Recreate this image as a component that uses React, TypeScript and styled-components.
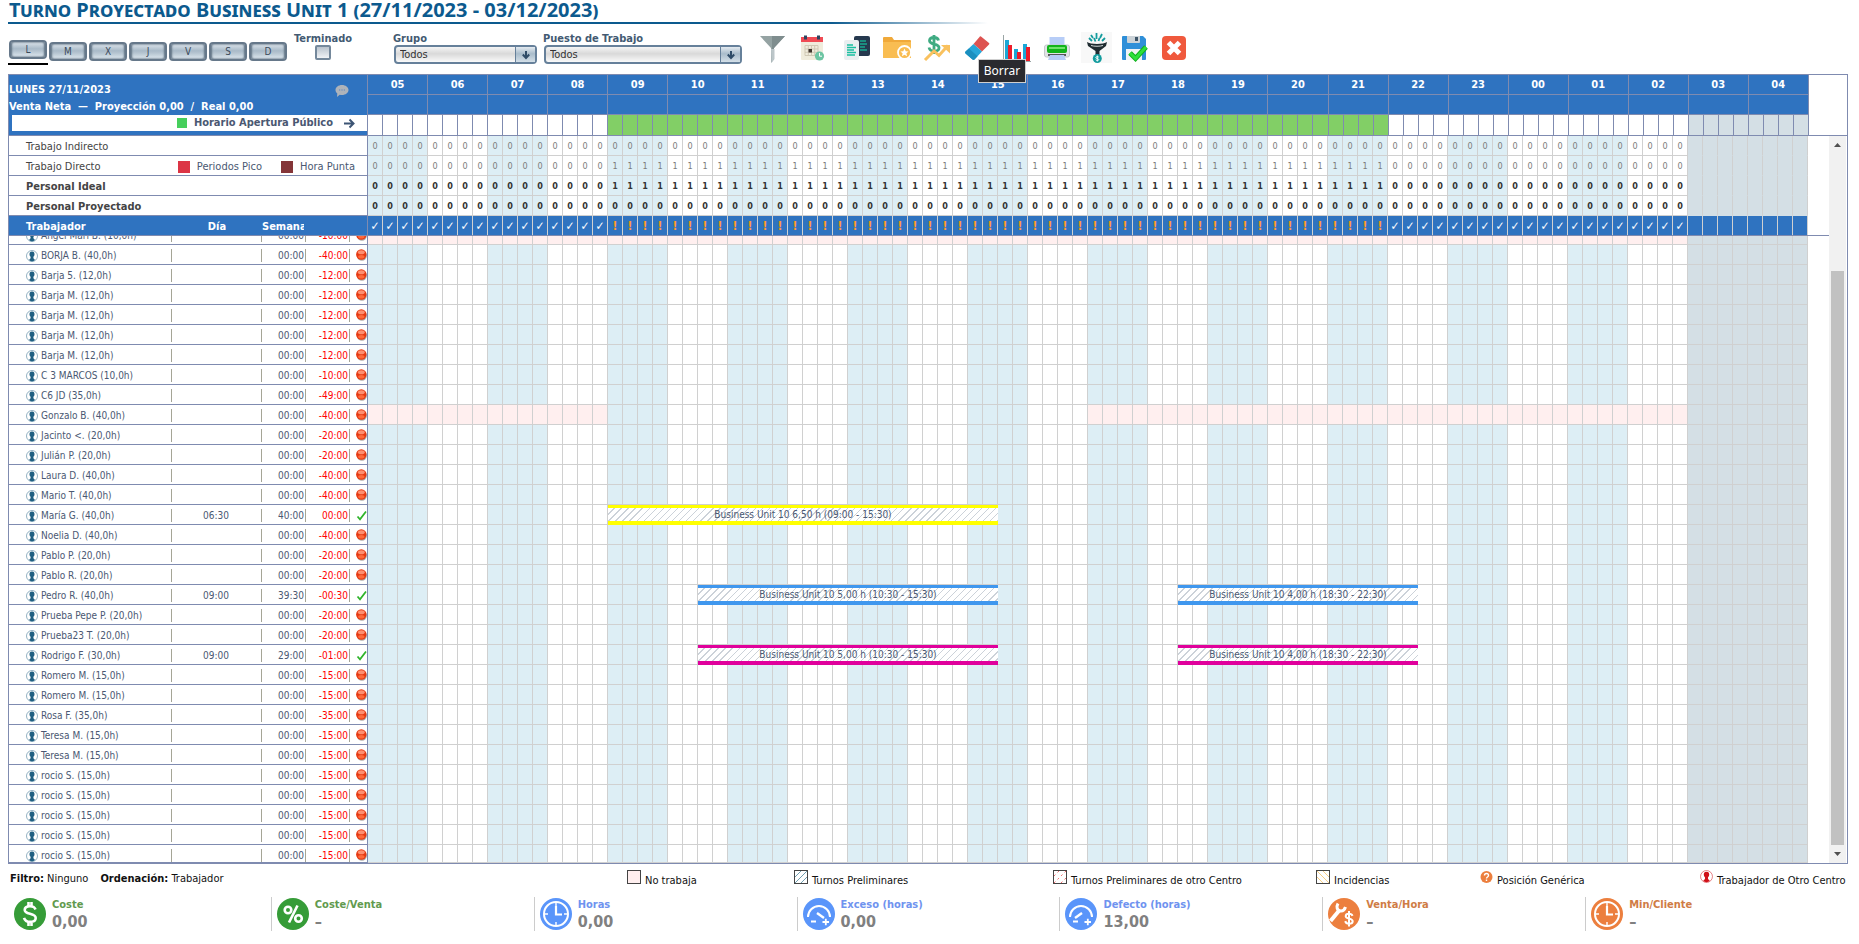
import React from 'react';
import styled, { createGlobalStyle } from 'styled-components';

const LINE = '#7f8bb0';
const GRID = '#d0d0d0';
const BLUE = '#2f73c0';
const TINT = '#ddeef5';
const CLOSED = '#d4dfe5';
const INK = '#4a5872';

const GlobalStyle = createGlobalStyle`
  * { box-sizing: border-box; }
  body {
    margin: 0;
    background: #fff;
    color: #444;
    font-family: 'DejaVu Sans Condensed', 'DejaVu Sans', sans-serif;
    font-stretch: condensed;
    font-size: 11px;
    line-height: 14px;
  }
  button, select { font: inherit; }
`;

const Page = styled.main`
  padding: 0 11px 0 8px;
`;

const Title = styled.h1`
  margin: 0;
  height: 24px;
  padding-left: 1px;
  color: #0c5a8e;
  font-family: 'Noto Sans', sans-serif;
  font-size: 20px;
  line-height: 19px;
  font-weight: 700;
  font-variant: small-caps;
  white-space: nowrap;
  background: linear-gradient(90deg, #0c5a8e 0 84%, transparent) left bottom / 980px 2px no-repeat;
`;

const Toolbar = styled.div`
  display: flex;
  align-items: flex-start;
  height: 50px;
  padding-top: 8px;
`;

const Days = styled.div`
  display: flex;
  padding-top: 8px;
`;

const DayTab = styled.div<{ $active: boolean }>`
  width: 40px;
  height: 25px;
  padding: ${p => (p.$active ? '0 1px' : '2px 1px 0')};
  border-bottom: 2px solid ${p => (p.$active ? '#000' : 'transparent')};
`;

const DayButton = styled.button`
  display: block;
  width: 38px;
  height: 19px;
  padding: 0;
  border: 2px solid #66788a;
  border-radius: 4px;
  background: linear-gradient(#dbe3ea, #a9bac8 45%, #b5c4d0 60%, #dfe9f0);
  box-shadow: inset 1px 0 2px #5f7283, inset -1px 0 2px #5f7283;
  color: #3b4a5a;
  font-size: 10px;
  line-height: 14px;
`;

const Field = styled.div<{ $width: number; $gap: number; $center?: boolean }>`
  display: flex;
  flex-direction: column;
  align-items: ${p => (p.$center ? 'center' : 'stretch')};
  width: ${p => p.$width}px;
  margin-left: ${p => p.$gap}px;
`;

const FieldLabel = styled.label`
  height: 13px;
  color: #435a72;
  font-weight: 700;
  line-height: 13px;
  white-space: nowrap;
`;

const Tick = styled.input`
  appearance: none;
  width: 16px;
  height: 15px;
  margin: 0;
  border: 2px solid #74889b;
  border-radius: 2px;
  background: linear-gradient(#b9c3cd, #f0f3f6);
`;

const SelectBox = styled.div`
  position: relative;
  display: flex;
  margin-left: 1px;
`;

const Select = styled.select`
  appearance: none;
  width: 100%;
  height: 19px;
  padding: 0 26px 0 4px;
  border: 2px solid #66809a;
  border-radius: 4px;
  background: linear-gradient(#f5f5f5, #d9d9d9 45%, #fafafa);
  color: #333;
  line-height: 14px;
`;

const SelectArrow = styled.span`
  position: absolute;
  top: 2px;
  right: 2px;
  display: flex;
  align-items: center;
  justify-content: center;
  width: 20px;
  height: 15px;
  border-left: 1px solid #66809a;
  background: linear-gradient(#e3eaf0, #a9bccb 45%, #d3dfe8);
  pointer-events: none;
`;

const Tools = styled.div<{ $gap: number }>`
  display: flex;
  gap: 8px;
  margin-left: ${p => p.$gap}px;
`;

const Tool = styled.button`
  position: relative;
  width: 32px;
  height: 32px;
  padding: 0;
  border: 0;
  background: none;

  svg { display: block; overflow: visible; }
`;

const Tooltip = styled.span`
  position: absolute;
  z-index: 2;
  left: 17px;
  top: 27px;
  width: 48px;
  height: 24px;
  border: 1px solid #cfcfcf;
  background: #2a2a2f;
  color: #fff;
  font-family: 'Noto Sans', sans-serif;
  font-size: 12px;
  line-height: 22px;
  text-align: center;
`;

const Frame = styled.section`
  border: 1px solid ${LINE};
`;

const Top = styled.div`
  border-bottom: 1px solid ${LINE};
  overflow: hidden;
`;

const Lower = styled.div`
  display: flex;
  padding-right: 1px;
`;

const Content = styled.div`
  flex: 1;
  min-width: 0;
  overflow: hidden;
`;

const Counts = styled.div`
  border-bottom: 1px solid ${LINE};
`;

const Viewport = styled.div`
  display: flex;
  flex-direction: column;
  justify-content: flex-end;
  max-height: calc(100vh - 317px);
  overflow: hidden;
`;

const Grid = styled.table`
  flex: none;
  width: 1799px;
  table-layout: fixed;
  border-collapse: separate;
  border-spacing: 0;

  td, th { padding: 0; font-weight: 400; }
`;

const Row = styled.tr<{ $h?: number }>`
  height: ${p => p.$h ?? 20}px;
`;

const DayCell = styled.th`
  vertical-align: top;
  text-align: left;
  border-right: 1px solid ${LINE};
  background: ${BLUE};
`;

const DayHead = styled.div`
  display: flex;
  justify-content: space-between;
  height: 25px;
  padding: 8px 18px 0 0;
  color: #fff;
  font-weight: 700;
`;

const Sales = styled.div`
  height: 15px;
  color: #fff;
  font-weight: 700;
  white-space: pre;
`;

const Opening = styled.div`
  display: flex;
  align-items: center;
  justify-content: flex-end;
  height: 16px;
  margin-left: 3px;
  padding-right: 12px;
  background: #fff;
  color: ${INK};
  font-weight: 700;

  svg { margin-left: 11px; }
`;

const Swatch = styled.i<{ $color: string; $size: number }>`
  width: ${p => p.$size}px;
  height: ${p => p.$size}px;
  margin-right: 7px;
  background: ${p => p.$color};
`;

const HourCell = styled.th`
  border-right: 1px solid ${LINE};
  border-bottom: 1px solid ${LINE};
  background: ${BLUE};
  color: #fff;
  text-align: center;

  && { font-weight: 700; }
`;

const OpenCell = styled.td<{ $bg: string }>`
  border-right: 1px solid ${LINE};
  background: ${p => p.$bg};
`;

const CountLabel = styled.th<{ $bold: boolean }>`
  border-right: 1px solid ${LINE};
  border-bottom: 1px solid ${LINE};
  text-align: left;
  color: #444;

  && { font-weight: ${p => (p.$bold ? 700 : 400)}; }
`;

const CountInner = styled.div`
  display: flex;
  align-items: center;
  justify-content: space-between;
  padding: 2px 12px 0 17px;
`;

const Peaks = styled.span`
  display: flex;
  align-items: center;
  gap: 19px;
  color: ${INK};
`;

const Peak = styled.span`
  display: flex;
  align-items: center;
`;

const CountCell = styled.td<{ $bg: string; $bold: boolean; $flat: boolean }>`
  border-right: 1px solid ${GRID};
  border-bottom: 1px solid ${p => (p.$flat ? p.$bg : GRID)};
  background: ${p => p.$bg};
  color: ${p => (p.$bold ? '#333' : '#7c7c7c')};
  font-size: 9px;
  line-height: 12px;
  text-align: center;

  && { font-weight: ${p => (p.$bold ? 700 : 400)}; }
`;

const StaffHead = styled.th<{ $align?: string; $last?: boolean }>`
  background: ${BLUE};
  border-right: ${p => (p.$last ? `1px solid ${LINE}` : '0')};
  color: #fff;
  text-align: ${p => p.$align ?? 'left'};

  && { font-weight: 700; padding-top: 2px; }
  &:first-child { padding-left: 17px; }
`;

const WeekHead = styled.div`
  width: 42px;
  overflow: hidden;
`;

const StateCell = styled.td<{ $warn: boolean }>`
  border-right: 1px solid ${GRID};
  background: ${BLUE};
  color: ${p => (p.$warn ? '#ff9a1f' : '#fff')};
  font-family: 'DejaVu Sans', sans-serif;
  font-size: 12px;
  line-height: 14px;
  text-align: center;

  && { font-weight: 700; }
`;

const StaffCell = styled.td<{ $last?: boolean }>`
  border-right: ${p => (p.$last ? `1px solid ${LINE}` : '0')};
  border-bottom: 1px solid ${LINE};
  color: ${INK};
  vertical-align: top;
`;

const Part = styled.div<{ $align?: string; $red?: boolean }>`
  display: flex;
  align-items: center;
  justify-content: ${p => p.$align ?? 'flex-end'};
  height: 13px;
  margin-top: 4px;
  padding-right: 1px;
  border-right: 1px solid #a5a596;
  color: ${p => (p.$red ? '#f00' : INK)};
  font-size: 10px;
  line-height: 13px;
  white-space: nowrap;
`;

const Name = styled(Part)`
  justify-content: flex-start;
  gap: 3px;
  padding-left: 17px;
`;

const Status = styled.div`
  display: flex;
  justify-content: flex-end;
  padding-top: 4px;
`;

const Slot = styled.td<{ $bg: string }>`
  border-right: 1px solid ${GRID};
  border-bottom: 1px solid ${GRID};
  background: ${p => p.$bg};
`;

const Shift = styled.div<{ $color: string }>`
  height: 20px;
  border-top: 3px solid ${p => p.$color};
  border-bottom: 4px solid ${p => p.$color};
  background: repeating-linear-gradient(135deg, #fff 0 4px, #ccd2d9 4px 5px);
  color: ${INK};
  font-size: 10px;
  line-height: 13px;
  text-align: center;
`;

const Scrollbar = styled.div`
  display: flex;
  flex-direction: column;
  align-items: center;
  width: 17px;
  background: #f1f1f1;
`;

const ScrollArrow = styled.svg`
  flex: none;
  width: 17px;
  height: 18px;
`;

const Thumb = styled.div`
  flex: 1;
  width: 13px;
  margin-top: 117px;
  background: #c1c1c1;
`;

const Legend = styled.div`
  display: grid;
  grid-template-columns: 619fr 167fr 259fr 263fr 164fr 220fr 148fr;
  height: 33px;
  padding-top: 6px;
  color: #111;
  white-space: nowrap;

  > * { min-width: 0; }
`;

const FilterInfo = styled.div`
  display: flex;
  gap: 12px;
  padding: 2px 0 0 2px;
`;

const LegendItem = styled.div`
  display: flex;
  gap: 4px;

  svg { flex: none; }
  span { padding-top: 4px; }
`;

const Kpis = styled.div`
  display: grid;
  grid-template-columns: repeat(7, 1fr);
`;

const Kpi = styled.div`
  display: flex;
  gap: 6px;
  height: 34px;
  padding: 1px 5px;
  border-left: 1px solid #ccc;

  &:first-child { border-color: transparent; }
`;

const KpiLabel = styled.div<{ $color: string }>`
  height: 14px;
  color: ${p => p.$color};
  font-weight: 700;
`;

const KpiValue = styled.div`
  color: #808080;
  font-size: 16px;
  line-height: 20px;
  font-weight: 700;
`;

const HOURS = ['05', '06', '07', '08', '09', '10', '11', '12', '13', '14', '15', '16', '17', '18', '19', '20', '21', '22', '23', '00', '01', '02', '03', '04'];
const QUARTERS = Array.from({ length: 96 }, (_, i) => i);
const OPEN_FROM = 16;
const OPEN_TO = 68;
const CLOSED_FROM = 88;

const isOpen = (i: number) => i >= OPEN_FROM && i < OPEN_TO;
const slotColor = (i: number) =>
  i >= CLOSED_FROM ? CLOSED : Math.floor(i / 4) % 2 === 0 ? TINT : '#fff';

type ShiftData = { from: number; to: number; color: string; text: string };
type Worker = {
  name: string;
  diff: string;
  day?: string;
  week?: string;
  ok?: boolean;
  off?: [number, number][];
  shifts?: ShiftData[];
};

const split = (color: string): ShiftData[] => [
  { from: 22, to: 42, color, text: 'Business Unit 10 5,00 h (10:30 - 15:30)' },
  { from: 54, to: 70, color, text: 'Business Unit 10 4,00 h (18:30 - 22:30)' },
];

const WORKERS: Worker[] = [
  { name: 'Ángel Marí B. (10,0h)', diff: '-10:00', off: [[0, 88]] },
  { name: 'BORJA B. (40,0h)', diff: '-40:00' },
  { name: 'Barja 5. (12,0h)', diff: '-12:00' },
  { name: 'Barja M. (12,0h)', diff: '-12:00' },
  { name: 'Barja M. (12,0h)', diff: '-12:00' },
  { name: 'Barja M. (12,0h)', diff: '-12:00' },
  { name: 'Barja M. (12,0h)', diff: '-12:00' },
  { name: 'C 3 MARCOS (10,0h)', diff: '-10:00' },
  { name: 'C6 JD (35,0h)', diff: '-49:00' },
  { name: 'Gonzalo B. (40,0h)', diff: '-40:00', off: [[0, 16], [48, 88]] },
  { name: 'Jacinto <. (20,0h)', diff: '-20:00' },
  { name: 'Julián P. (20,0h)', diff: '-20:00' },
  { name: 'Laura D. (40,0h)', diff: '-40:00' },
  { name: 'Mario T. (40,0h)', diff: '-40:00' },
  {
    name: 'María G. (40,0h)', day: '06:30', week: '40:00', diff: '00:00', ok: true,
    shifts: [{ from: 16, to: 42, color: '#ffff00', text: 'Business Unit 10 6,50 h (09:00 - 15:30)' }],
  },
  { name: 'Noelia D. (40,0h)', diff: '-40:00' },
  { name: 'Pablo P. (20,0h)', diff: '-20:00' },
  { name: 'Pablo R. (20,0h)', diff: '-20:00' },
  { name: 'Pedro R. (40,0h)', day: '09:00', week: '39:30', diff: '-00:30', ok: true, shifts: split('#3f97ee') },
  { name: 'Prueba Pepe P. (20,0h)', diff: '-20:00' },
  { name: 'Prueba23 T. (20,0h)', diff: '-20:00' },
  { name: 'Rodrigo F. (30,0h)', day: '09:00', week: '29:00', diff: '-01:00', ok: true, shifts: split('#e0009c') },
  { name: 'Romero M. (15,0h)', diff: '-15:00' },
  { name: 'Romero M. (15,0h)', diff: '-15:00' },
  { name: 'Rosa F. (35,0h)', diff: '-35:00' },
  { name: 'Teresa M. (15,0h)', diff: '-15:00' },
  { name: 'Teresa M. (15,0h)', diff: '-15:00' },
  { name: 'rocio S. (15,0h)', diff: '-15:00' },
  { name: 'rocio S. (15,0h)', diff: '-15:00' },
  { name: 'rocio S. (15,0h)', diff: '-15:00' },
  { name: 'rocio S. (15,0h)', diff: '-15:00' },
  { name: 'rocio S. (15,0h)', diff: '-15:00' },
];

const COUNTS = [
  { label: 'Trabajo Indirecto', bold: false, open: 0 },
  { label: 'Trabajo Directo', bold: false, open: 1, peaks: true },
  { label: 'Personal Ideal', bold: true, open: 1 },
  { label: 'Personal Proyectado', bold: true, open: 0 },
];

const Col = styled.col<{ $w: number }>`
  width: ${p => p.$w}px;
`;

const Columns = () => (
  <colgroup>
    <Col $w={163} />
    <Col $w={90} />
    <Col $w={44} />
    <Col $w={44} />
    <Col $w={18} />
    {QUARTERS.map(i => <Col key={i} $w={15} />)}
  </colgroup>
);

const UserIcon = ({ color = '#1f5f82', size = 12 }: { color?: string; size?: number }) => (
  <svg width={size} height={size} viewBox="0 0 12 12">
    <circle cx="6" cy="6" r="5.5" fill="#fff" stroke={color} strokeWidth="0.8" strokeOpacity="0.6" />
    <path d="M6 1.500c-1.900 0-2.500 1.200-2.500 2.700 0 1.100.4 2 1.100 2.500V8.200L3 10c1 1 2 1.300 3 1.300s2-.3 3-1.300L7.400 8.200V6.700c.7-.5 1.100-1.400 1.100-2.500C8.500 2.700 7.900 1.500 6 1.500z" fill={color} />
  </svg>
);

const SadIcon = () => (
  <svg width="11" height="12" viewBox="0 0 11 12">
    <ellipse cx="5.900" cy="6.500" rx="5" ry="5.200" fill="#777" fillOpacity="0.6" />
    <circle cx="5.300" cy="5.500" r="5.200" fill="#e63912" />
    <ellipse cx="5.300" cy="3.300" rx="3.400" ry="2" fill="#ff8f70" />
    <ellipse cx="5.300" cy="7.800" rx="3.200" ry="1.800" fill="#ff6a3c" />
  </svg>
);

const CheckIcon = () => (
  <svg width="11" height="12" viewBox="0 0 11 12">
    <path d="M1.500 7.500l2.500 2.800L10 2.500" fill="none" stroke="#2fb42a" strokeWidth="1.800" />
  </svg>
);

const ArrowDown = () => (
  <SelectArrow>
    <svg width="10" height="10" viewBox="0 0 10 10">
      <path d="M5 1v6M1.800 4.500L5 8l3.200-3.500" fill="none" stroke="#2f4c68" strokeWidth="2" />
    </svg>
  </SelectArrow>
);

const FilterIcon = () => (
  <svg width="32" height="32" viewBox="0 0 32 32">
    <path d="M4 4h25L18 16v11l-3 4V16z" fill="#95a3a3" />
    <path d="M16 4h13L18 16v11l-2 2z" fill="#7f8d8e" />
    <path d="M15 17h3.500v10L15.500 31z" fill="#bcc6c9" />
  </svg>
);
const CalendarIcon = () => (
  <svg width="32" height="32" viewBox="0 0 32 32">
    <path d="M5 6h22v21a1 1 0 0 1-1 1H6a1 1 0 0 1-1-1z" fill="#f0ecdc" />
    <path d="M5 5h22v5H5z" fill="#f04b54" />
    <path d="M8 3.500h3v4H8zM21 3.500h3v4h-3z" fill="#2c4560" />
    <path d="M9 13.500h13v10H9zM9 17h13M9 20.300h13M12.300 13.500v10M15.500 13.500v10M18.700 13.500v10" fill="none" stroke="#d0c9b5" />
    <path d="M12.500 17h3.500v3.500h-3.500z" fill="#40352c" />
    <circle cx="23.500" cy="24" r="4.600" fill="#6dc5a3" />
    <path d="M23.500 21v3.200h2.500" fill="none" stroke="#fff" />
  </svg>
);
const DocsIcon = () => (
  <svg width="32" height="32" viewBox="0 0 32 32">
    <rect x="13" y="4" width="16" height="20" rx="2" fill="#26394f" />
    <path d="M19 9h6M19 12h7M19 15h5M19 18h7" stroke="#18a890" strokeWidth="1.500" />
    <rect x="3" y="8" width="15" height="20" rx="2" fill="#e9eef0" />
    <path d="M6 13h6M6 15.500h9M6 18h7M6 20.500h9M6 23h8" stroke="#18bfa0" strokeWidth="1.600" />
  </svg>
);
const FolderIcon = () => (
  <svg width="32" height="32" viewBox="0 0 32 32">
    <path d="M2 6a1 1 0 0 1 1-1h8l2 3h16a1 1 0 0 1 1 1v17H3a1 1 0 0 1-1-1z" fill="#f0a93a" />
    <path d="M2 10h28v16H3a1 1 0 0 1-1-1z" fill="#f9bd52" />
    <circle cx="23.500" cy="20.500" r="6.500" fill="#f9bd52" stroke="#fff" strokeWidth="1.800" />
    <path d="M23.500 16.500l1.200 2.700 2.900.2-2.200 1.900.7 2.900-2.600-1.500-2.600 1.500.7-2.900-2.200-1.900 2.900-.2z" fill="#fff" />
  </svg>
);
const GrowthIcon = () => (
  <svg width="32" height="32" viewBox="0 0 32 32">
    <path d="M17.500 8.500c-.5-2.200-2.300-3-4.500-3-2.700 0-4.500 1.300-4.500 3.300 0 4.500 9.500 2.200 9.500 7 0 2.200-2 3.400-4.700 3.400-2.800 0-4.700-1.200-5.300-3.700M13 3v19" fill="none" stroke="#3fab82" strokeWidth="2.800" />
    <path d="M4 28l9-9 5 4.500 9-10" fill="none" stroke="#f9c15e" strokeWidth="3" />
    <path d="M20 13h9v8.500z" fill="#f9c15e" />
  </svg>
);
const EraserIcon = () => (
  <svg width="32" height="32" viewBox="0 0 32 32">
    <path d="M20 4.500l8 6.500a1 1 0 0 1 0 1.500L21 19.500 12.500 12l6-7a1 1 0 0 1 1.500-.5z" fill="#dd5350" />
    <path d="M12.500 12l8.500 7.500-7.500 8a1.500 1.500 0 0 1-2 0L4.500 21.500a1.500 1.500 0 0 1 0-2z" fill="#26a6d8" />
    <path d="M8 16.500l8.500 7.800-3 3.200a1.500 1.500 0 0 1-2 0l-7-6a1.500 1.500 0 0 1 0-2z" fill="#1a8fbf" />
  </svg>
);
const ChartIcon = () => (
  <svg width="32" height="32" viewBox="0 0 32 32">
    <path d="M2.500 3v26.500H30" fill="none" stroke="#9aa5a5" />
    <path d="M4 8h4v21H4zM13 17h4v12h-4zM22 12h4v17h-4z" fill="#1aa7d6" />
    <path d="M7 13h4v16H7zM16 20h4v9h-4zM25 15h4v14h-4z" fill="#ee1c2a" />
  </svg>
);
const PrintIcon = () => (
  <svg width="32" height="32" viewBox="0 0 32 32">
    <path d="M8.500 5h15v9h-15z" fill="#b7cdf7" />
    <rect x="3.500" y="13" width="25" height="12" rx="2" fill="#e1e3e6" stroke="#c4c8cd" />
    <rect x="6" y="13" width="20" height="8" rx="2" fill="#12b41a" />
    <path d="M8 15h16v2H8z" fill="#6fe36c" />
    <path d="M7 22h18v2H7z" fill="#555" />
    <path d="M9 23h14l2 5H7z" fill="#b7cdf7" />
  </svg>
);
const MoneyFilterIcon = () => (
  <svg width="32" height="32" viewBox="0 0 32 32">
    <rect y="0" width="31" height="31" fill="#f8f8f8" />
    <path d="M10 3l2 3M15.500 1v6M21 2l-2 4M8 6l3 3M13 6l1.500 3.500M24 6l-3 3M18.500 6l-1 3" stroke="#139c9e" strokeWidth="1.800" />
    <path d="M6 10c3 2.500 17 2.500 20 0l-1 4-6.500 5v5h-4v-5L7 14z" fill="#1f2b30" />
    <path d="M10 13.500c3 1 9 1 12 0" stroke="#cfd8d8" fill="none" />
    <circle cx="16.300" cy="26.500" r="4.500" fill="#139c9e" />
    <path d="M17.800 25.200c-.8-1-3-.7-3 .4 0 1.400 3 .6 3 2 0 1.100-2.300 1.300-3.100.2M16.300 23.500v6" fill="none" stroke="#fff" strokeWidth="0.900" />
  </svg>
);
const SaveIcon = () => (
  <svg width="32" height="32" viewBox="0 0 32 32">
    <path d="M4 5a1 1 0 0 1 1-1h20l3 3v20a1 1 0 0 1-1 1H5a1 1 0 0 1-1-1z" fill="#2f8fd8" />
    <path d="M9 4h13v6a1 1 0 0 1-1 1H10a1 1 0 0 1-1-1z" fill="#ccd3d8" />
    <path d="M17 5h3v4h-3z" fill="#3d5468" />
    <path d="M8 17h16v11H8z" fill="#f1f3f5" />
    <path d="M12 21l5.500 5.500L28 15" fill="none" stroke="#0fae1d" strokeWidth="5" />
    <path d="M12 21l5.500 5.500L28 15" fill="none" stroke="#2ee03a" strokeWidth="3" />
  </svg>
);
const CloseIcon = () => (
  <svg width="32" height="32" viewBox="0 0 32 32">
    <rect x="4" y="4" width="24" height="24" rx="4" fill="#f0593d" />
    <path d="M10.500 10.500l11 11M21.500 10.500l-11 11" stroke="#fff" strokeWidth="5" />
  </svg>
);

const KPI_ART: Record<string, React.ReactNode> = {
  dollar: (
    <path d="M21.500 11.500c-.7-2.300-2.700-3.300-5.500-3.300-3.200 0-5.300 1.500-5.300 3.800 0 5 11 2.600 11 8 0 2.400-2.400 3.900-5.700 3.900-3.100 0-5.200-1.300-6-4M14.500 4v4M17.500 4v4M14.500 24v4M17.500 24v4" fill="none" stroke="#fff" strokeWidth="2.600" />
  ),
  percent: (
    <g fill="none" stroke="#fff" strokeWidth="2.600">
      <circle cx="11" cy="12" r="3.300" />
      <circle cx="21.500" cy="20.500" r="3.300" />
      <path d="M20.500 7.500l-8.500 17" />
    </g>
  ),
  clock: (
    <g fill="none" stroke="#fff">
      <circle cx="16" cy="16" r="12" strokeWidth="2" />
      <path d="M16 8v8.500h6" strokeWidth="2.200" />
      <path d="M16 5v3M16 24v3M5 16h3M24 16h3" strokeWidth="1.400" />
    </g>
  ),
  more: (
    <g fill="none" stroke="#fff">
      <path d="M5 19a11 11 0 1 1 22 0" strokeWidth="2" />
      <path d="M14 15l7 5" strokeWidth="2.400" />
      <path d="M8 23.500h5M19.500 24h6.500M22.800 20.800v6.500" strokeWidth="1.800" />
    </g>
  ),
  less: (
    <g fill="none" stroke="#fff">
      <path d="M5 19a11 11 0 1 1 22 0" strokeWidth="2" />
      <path d="M17 15l-7 5" strokeWidth="2.400" />
      <path d="M8 23.500h5M19.500 24h6.500M22.800 20.800v6.500" strokeWidth="1.800" />
    </g>
  ),
  wrench: (
    <g fill="none" stroke="#fff">
      <path d="M2.500 23L12 11.500" strokeWidth="4" />
      <path d="M10 5.500c-2 3.500-1 7 2.500 7.500 2.500.3 4-1 5-4" strokeWidth="3" />
      <path d="M24.500 17.800c-.5-1.400-1.800-2-3.500-2-2 0-3.300 1-3.300 2.400 0 3.200 7 1.700 7 5 0 1.500-1.500 2.500-3.700 2.500-2 0-3.300-.9-3.800-2.600M21 13v15.500" strokeWidth="2" />
    </g>
  ),
};

const KPIS = [
  { label: 'Coste', value: '0,00', art: 'dollar', fill: '#369c38', ink: '#629a4e' },
  { label: 'Coste/Venta', value: '–', art: 'percent', fill: '#369c38', ink: '#629a4e' },
  { label: 'Horas', value: '0,00', art: 'clock', fill: '#5a95fa', ink: '#6f93ef' },
  { label: 'Exceso (horas)', value: '0,00', art: 'more', fill: '#5a95fa', ink: '#6f93ef' },
  { label: 'Defecto (horas)', value: '13,00', art: 'less', fill: '#5a95fa', ink: '#6f93ef' },
  { label: 'Venta/Hora', value: '–', art: 'wrench', fill: '#ec7f3e', ink: '#cf7c45' },
  { label: 'Min/Cliente', value: '–', art: 'clock', fill: '#ec7f3e', ink: '#cf7c45' },
];

const LegendBox = ({ fill, stroke, d, dash }: { fill: string; stroke?: string; d?: string; dash?: string }) => (
  <svg width="14" height="14" viewBox="0 0 14 14">
    <rect x="0.500" y="0.500" width="13" height="13" fill={fill} stroke="#444" />
    {d && <path d={d} stroke={stroke} fill="none" strokeDasharray={dash} />}
  </svg>
);

const TOOL_GROUPS = [
  { gap: 14, items: [['Filtrar', FilterIcon], ['Calendario', CalendarIcon]] },
  {
    gap: 13,
    items: [
      ['Copiar', DocsIcon], ['Plantillas', FolderIcon], ['Ventas', GrowthIcon], ['Borrar', EraserIcon],
      ['Gráfico', ChartIcon], ['Imprimir', PrintIcon], ['Embudo', MoneyFilterIcon],
    ],
  },
  { gap: 5, items: [['Guardar', SaveIcon], ['Cerrar', CloseIcon]] },
] as { gap: number; items: [string, () => React.ReactElement][] }[];

function slotsFor(worker: Worker) {
  const cells: React.ReactNode[] = [];
  let i = 0;
  while (i < 96) {
    const shift = worker.shifts?.find(s => s.from === i);
    if (shift) {
      cells.push(
        <td key={i} colSpan={shift.to - shift.from}>
          <Shift $color={shift.color}>{shift.text}</Shift>
        </td>,
      );
      i = shift.to;
    } else {
      const at = i;
      const off = worker.off?.some(([a, b]) => at >= a && at < b);
      cells.push(<Slot key={i} $bg={off ? '#ffefef' : slotColor(i)} />);
      i += 1;
    }
  }
  return cells;
}

export default function App() {
  return (
    <Page>
      <GlobalStyle />
      <Title>Turno Proyectado Business Unit 1 (27/11/2023 - 03/12/2023)</Title>

      <Toolbar>
        <Days>
          {['L', 'M', 'X', 'J', 'V', 'S', 'D'].map(d => (
            <DayTab key={d} $active={d === 'L'}>
              <DayButton type="button">{d}</DayButton>
            </DayTab>
          ))}
        </Days>
        <Field $width={60} $gap={5} $center>
          <FieldLabel htmlFor="done">Terminado</FieldLabel>
          <Tick id="done" type="checkbox" />
        </Field>
        <Field $width={144} $gap={40}>
          <FieldLabel htmlFor="group">Grupo</FieldLabel>
          <SelectBox>
            <Select id="group"><option>Todos</option></Select>
            <ArrowDown />
          </SelectBox>
        </Field>
        <Field $width={199} $gap={6}>
          <FieldLabel htmlFor="job">Puesto de Trabajo</FieldLabel>
          <SelectBox>
            <Select id="job"><option>Todos</option></Select>
            <ArrowDown />
          </SelectBox>
        </Field>
        {TOOL_GROUPS.map(group => (
          <Tools key={group.gap} $gap={group.gap}>
            {group.items.map(([label, Icon]) => (
              <Tool key={label} type="button" aria-label={label}>
                <Icon />
                {label === 'Borrar' && <Tooltip role="tooltip">Borrar</Tooltip>}
              </Tool>
            ))}
          </Tools>
        ))}
      </Toolbar>

      <Frame>
        <Top>
          <Grid>
            <Columns />
            <thead>
              <Row>
                <DayCell colSpan={5} rowSpan={3}>
                  <DayHead>
                    LUNES 27/11/2023
                    <svg width="14" height="14" viewBox="0 0 14 14">
                      <path d="M7 2c3.600 0 6.500 2.200 6.500 5s-2.900 5-6.500 5c-.8 0-1.600-.1-2.300-.3L2 14l.3-3.500C1.200 9.600.5 8.400.5 7 .5 4.200 3.400 2 7 2z" fill="#aeb3ba" />
                      <path d="M4 7h1.200M6.400 7h1.200M8.800 7H10" stroke="#5c86bd" strokeWidth="1.200" />
                    </svg>
                  </DayHead>
                  <Sales>{'Venta Neta  —  Proyección 0,00  /  Real 0,00'}</Sales>
                  <Opening>
                    <Swatch $color="#46cf5c" $size={10} />
                    Horario Apertura Público
                    <svg width="11" height="11" viewBox="0 0 11 11">
                      <path d="M0 5.500h9M5.500 1.500l4 4-4 4" fill="none" stroke="#3c5474" strokeWidth="2" />
                    </svg>
                  </Opening>
                </DayCell>
                {HOURS.map(h => <HourCell key={h} colSpan={4}>{h}</HourCell>)}
              </Row>
              <Row>{HOURS.map(h => <HourCell key={h} colSpan={4} />)}</Row>
              <Row>
                {QUARTERS.map(i => (
                  <OpenCell key={i} $bg={isOpen(i) ? '#82cf66' : i >= CLOSED_FROM ? CLOSED : '#fff'} />
                ))}
              </Row>
            </thead>
          </Grid>
        </Top>

        <Lower>
          <Content>
            <Counts>
              <Grid>
                <Columns />
                <tbody>
                  {COUNTS.map(row => (
                    <Row key={row.label}>
                      <CountLabel colSpan={5} $bold={row.bold}>
                        <CountInner>
                          {row.label}
                          {row.peaks && (
                            <Peaks>
                              <Peak><Swatch $color="#dc3545" $size={12} />Periodos Pico</Peak>
                              <Peak><Swatch $color="#843538" $size={12} />Hora Punta</Peak>
                            </Peaks>
                          )}
                        </CountInner>
                      </CountLabel>
                      {QUARTERS.map(i => (
                        <CountCell key={i} $bg={slotColor(i)} $bold={row.bold} $flat={i >= CLOSED_FROM}>
                          {i < CLOSED_FROM && (isOpen(i) ? row.open : 0)}
                        </CountCell>
                      ))}
                    </Row>
                  ))}
                  <Row $h={19}>
                    <StaffHead>Trabajador</StaffHead>
                    <StaffHead $align="center">Día</StaffHead>
                    <StaffHead><WeekHead>Semana</WeekHead></StaffHead>
                    <StaffHead />
                    <StaffHead $last />
                    {QUARTERS.map(i => (
                      <StateCell key={i} $warn={isOpen(i)}>
                        {i < CLOSED_FROM && (isOpen(i) ? '!' : '✓')}
                      </StateCell>
                    ))}
                  </Row>
                </tbody>
              </Grid>
            </Counts>
            <Viewport>
              <Grid>
                <Columns />
                <tbody>
                  {WORKERS.map((w, n) => (
                    <Row key={n} $h={n === WORKERS.length - 1 ? 18 : 20}>
                      <StaffCell><Name><UserIcon />{w.name}</Name></StaffCell>
                      <StaffCell><Part $align="center">{w.day}</Part></StaffCell>
                      <StaffCell><Part>{w.week ?? '00:00'}</Part></StaffCell>
                      <StaffCell><Part $red>{w.diff}</Part></StaffCell>
                      <StaffCell $last><Status>{w.ok ? <CheckIcon /> : <SadIcon />}</Status></StaffCell>
                      {slotsFor(w)}
                    </Row>
                  ))}
                </tbody>
              </Grid>
            </Viewport>
          </Content>
          <Scrollbar>
            <ScrollArrow viewBox="0 0 17 18"><path d="M5 11h7L8.500 7z" fill="#505050" /></ScrollArrow>
            <Thumb />
            <ScrollArrow viewBox="0 0 17 18"><path d="M5 7h7l-3.500 4z" fill="#505050" /></ScrollArrow>
          </Scrollbar>
        </Lower>
      </Frame>

      <Legend>
        <FilterInfo>
          <span><b>Filtro:</b> Ninguno</span>
          <span><b>Ordenación:</b> Trabajador</span>
        </FilterInfo>
        <LegendItem><LegendBox fill="#ffefef" /><span>No trabaja</span></LegendItem>
        <LegendItem>
          <LegendBox fill="#fff" stroke="#6f9fb0" d="M1 7l6-6M1 13L13 1M7 13l6-6" />
          <span>Turnos Preliminares</span>
        </LegendItem>
        <LegendItem>
          <LegendBox fill="#fff" stroke="#f06a6a" dash="2 3" d="M1 6l5-5M1 13L13 1M8 13l5-5" />
          <span>Turnos Preliminares de otro Centro</span>
        </LegendItem>
        <LegendItem>
          <LegendBox fill="#fff" stroke="#f8cf84" d="M1 7l6 6M1 1l12 12M7 1l6 6" />
          <span>Incidencias</span>
        </LegendItem>
        <LegendItem>
          <svg width="13" height="14" viewBox="0 0 13 14">
            <circle cx="6.500" cy="7" r="6" fill="#ec7f3e" />
            <path d="M4.500 5.500c0-2.600 4-2.600 4 0 0 1.500-2 1.500-2 3M6.500 9.500v1.400" fill="none" stroke="#fff" strokeWidth="1.400" />
          </svg>
          <span>Posición Genérica</span>
        </LegendItem>
        <LegendItem>
          <UserIcon color="#d01018" size={13} />
          <span>Trabajador de Otro Centro</span>
        </LegendItem>
      </Legend>

      <Kpis>
        {KPIS.map(k => (
          <Kpi key={k.label}>
            <svg width="32" height="32" viewBox="0 0 32 32">
              <circle cx="16" cy="16" r="16" fill={k.fill} />
              {KPI_ART[k.art]}
            </svg>
            <div>
              <KpiLabel $color={k.ink}>{k.label}</KpiLabel>
              <KpiValue>{k.value}</KpiValue>
            </div>
          </Kpi>
        ))}
      </Kpis>
    </Page>
  );
}
